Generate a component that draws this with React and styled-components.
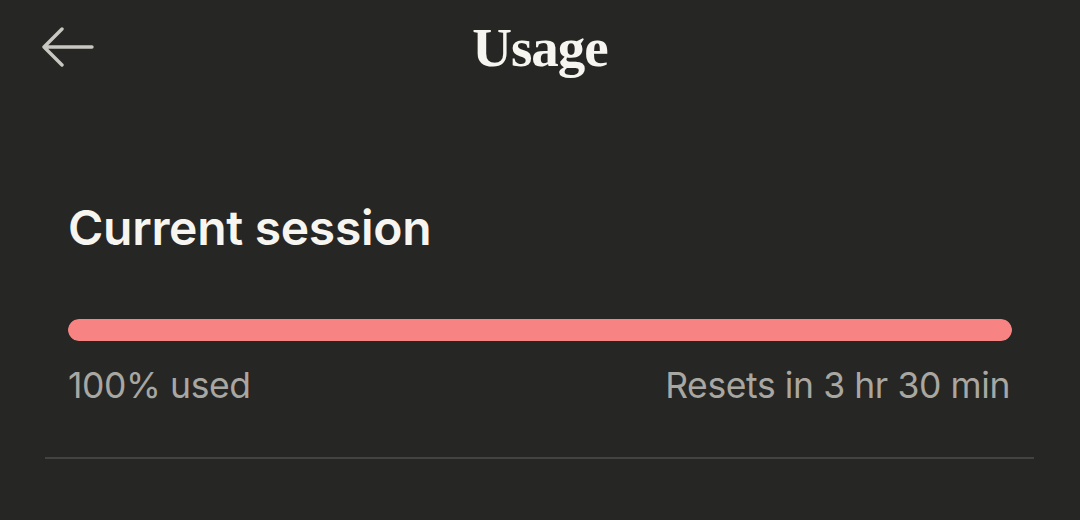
import React from "react";
import styled, { createGlobalStyle } from "styled-components";

const Global = createGlobalStyle`
  html, body { margin: 0; padding: 0; background: #262624; }
  body { width: 1080px; height: 520px; overflow: hidden; }
`;

const Page = styled.div`
  width: 1080px;
  height: 520px;
  background: #262624;
  display: flex;
  flex-direction: column;
  font-family: Inter, "Noto Sans", sans-serif;
`;

const Header = styled.header`
  height: 96px;
  display: grid;
  grid-template-columns: 1fr auto 1fr;
  align-items: center;
  padding: 0 42px;
  box-sizing: border-box;
`;

const BackButton = styled.button`
  justify-self: start;
  background: none;
  border: none;
  padding: 0;
  width: 52px;
  height: 40px;
  display: flex;
  align-items: center;
  color: #c9c7c1;
  margin-top: -2px;
`;

const Title = styled.h1`
  margin: 0;
  margin-top: -2px;
  font-family: "Liberation Serif", "DejaVu Serif", serif;
  font-weight: 700;
  font-size: 55px;
  letter-spacing: -1px;
  color: #f7f5f0;
`;

const Section = styled.section`
  padding: 104px 68px 0 68px;
  display: flex;
  flex-direction: column;
`;

const SectionTitle = styled.h2`
  margin: 0;
  font-size: 48px;
  line-height: 56px;
  font-weight: 600;
  letter-spacing: -0.3px;
  color: #f7f5f0;
`;

const Track = styled.div`
  margin-top: 63px;
  height: 22px;
  border-radius: 11px;
  background: #3a3a37;
  overflow: hidden;
`;

const Fill = styled.div`
  height: 100%;
  background: #f88383;
  border-radius: 11px;
`;

const Meta = styled.div`
  margin-top: 22px;
  padding-right: 2px;
  display: flex;
  justify-content: space-between;
  font-size: 35.5px;
  line-height: 46px;
  color: #a9a7a1;
  letter-spacing: -0.4px;
`;

const Divider = styled.hr`
  margin: 48px 46px 0 45px;
  border: none;
  height: 2px;
  background: #44433f;
`;

export default function App() {
  const pct = 100;
  return (
    <Page>
      <Global />
      <Header>
        <BackButton aria-label="Back">
          <svg width="52" height="40" viewBox="0 0 52 40" fill="none">
            <path
              d="M2 20 H50 M20 2 L2 20 L20 38"
              stroke="currentColor"
              strokeWidth="3.4"
              strokeLinecap="round"
              strokeLinejoin="round"
            />
          </svg>
        </BackButton>
        <Title>Usage</Title>
        <div />
      </Header>
      <Section>
        <SectionTitle>Current session</SectionTitle>
        <Track>
          <Fill style={{ width: `${pct}%` }} />
        </Track>
        <Meta>
          <span>{pct}% used</span>
          <span>Resets in 3 hr 30 min</span>
        </Meta>
      </Section>
      <Divider />
    </Page>
  );
}
